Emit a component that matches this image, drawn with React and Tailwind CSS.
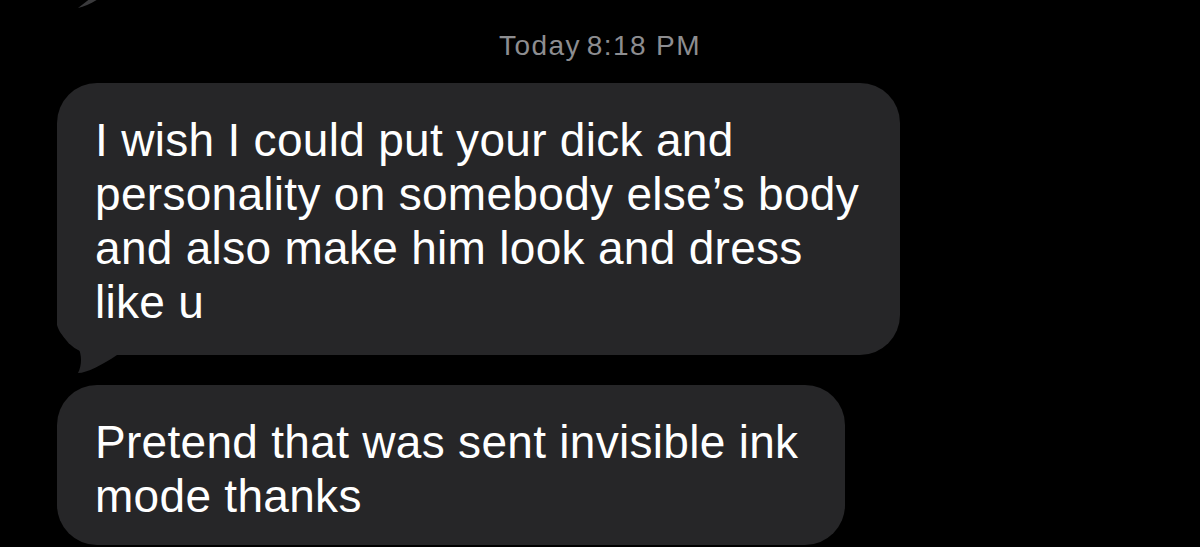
export default function App() {
  return (
    <div className="relative w-[1200px] h-[547px] overflow-hidden bg-black" style={{ fontFamily: '"Liberation Sans", Arial, sans-serif' }}>
      <svg className="absolute left-[70px] top-[-30px]" width="40" height="40" viewBox="0 0 40 40">
        <path d="M8 38 C16 36 26 32 34 24 L30 18 C24 26 16 32 8 38 Z" fill="#3a3a3c" />
      </svg>
      <div className="flex flex-col">
        <div className="h-[83px] flex items-start justify-center pt-[30px] text-[28px] leading-[32px] tracking-[1.4px] text-[#8d8d90]">
          <span>Today</span>
          <span className="ml-[6px]">8:18 PM</span>
        </div>
        <div className="pl-[57px] flex flex-col gap-[30px]">
          <div className="relative w-[843px] h-[272px] rounded-[40px] bg-[#262628] px-[38px] pt-[30px] text-white text-[46px] leading-[54px] tracking-[0.3px]">
            <svg className="absolute left-0 top-[232px]" width="70" height="60" viewBox="0 0 70 60">
              <path d="M0 0 L0 10 C4 24 16 28 21 32 C25 40 25 50 21 58 C30 58 45 50 60 40 L60 0 Z" fill="#262628" />
            </svg>
            <div className="relative whitespace-nowrap">
              I wish I could put your dick and<br />
              personality on somebody else’s body<br />
              and also make him look and dress<br />
              like u
            </div>
          </div>
          <div className="relative w-[788px] h-[160px] rounded-[40px] bg-[#262628] px-[38px] pt-[30px] text-white text-[46px] leading-[54px] tracking-[0.3px] whitespace-nowrap">
            Pretend that was sent invisible ink<br />
            mode thanks
          </div>
        </div>
      </div>
    </div>
  );
}
